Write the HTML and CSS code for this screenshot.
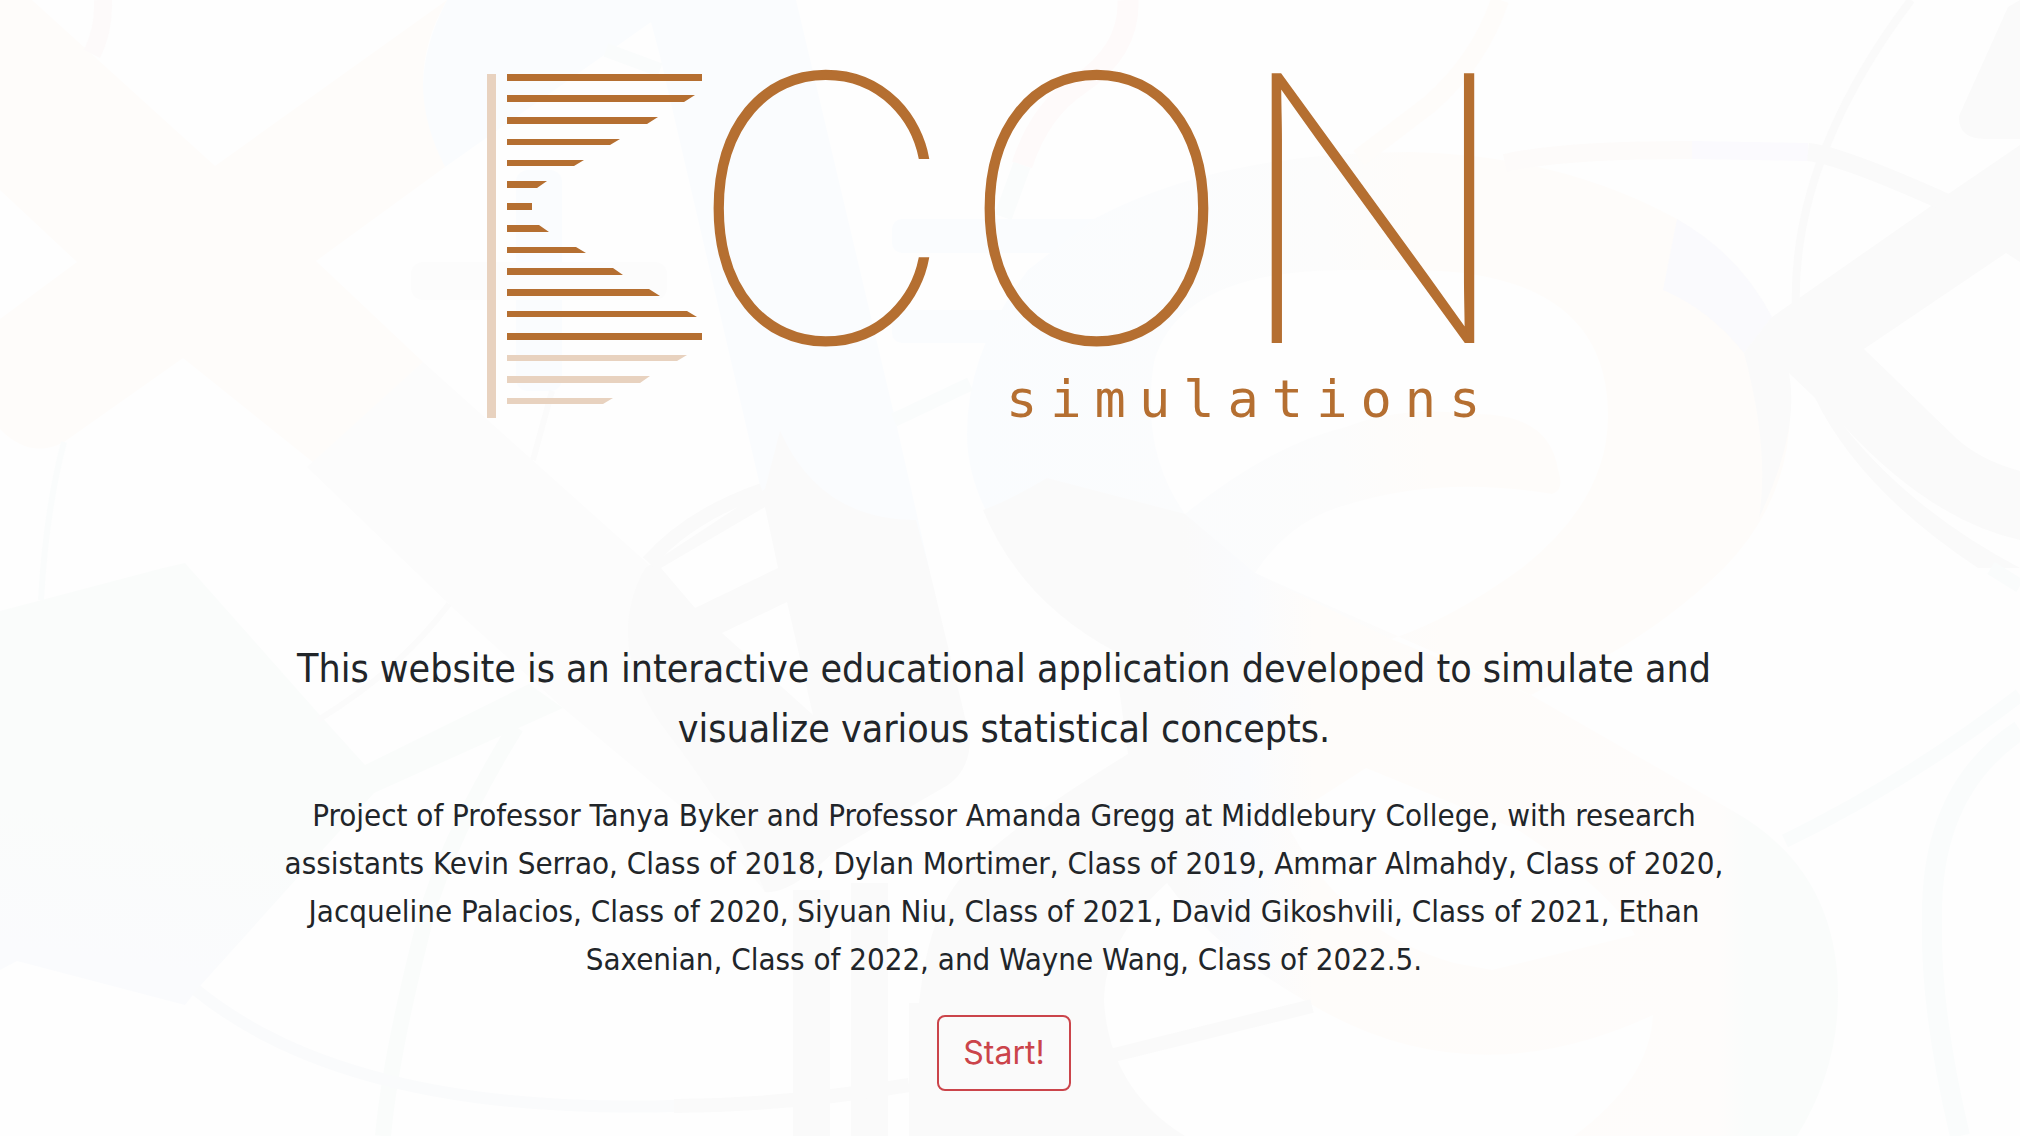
FILE: index.html
```html
<!DOCTYPE html>
<html lang="en">
<head>
<meta charset="utf-8">
<title>Econ Simulations</title>
<link rel="stylesheet" href="styles.css">
</head>
<body>
<svg class="backdrop" viewBox="0 0 2020 1136" preserveAspectRatio="xMidYMid slice" aria-hidden="true">
  <defs>
    <linearGradient id="ring" gradientUnits="userSpaceOnUse" x1="967" y1="330" x2="1420" y2="300">
      <stop offset="0" stop-color="#fafcfe"/><stop offset=".45" stop-color="#fbfcfd"/><stop offset=".8" stop-color="#fcfcfc"/><stop offset="1" stop-color="#fefcfa"/>
    </linearGradient>
    <linearGradient id="tail" gradientUnits="userSpaceOnUse" x1="900" y1="0" x2="1840" y2="0">
      <stop offset="0" stop-color="#fafafa"/><stop offset=".3" stop-color="#fafafa"/><stop offset=".37" stop-color="#fafbfd"/><stop offset=".44" stop-color="#fefcfa"/><stop offset=".87" stop-color="#fefcfb"/><stop offset=".9" stop-color="#fafcfb"/>
    </linearGradient>
    <linearGradient id="leaf" gradientUnits="userSpaceOnUse" x1="120" y1="820" x2="100" y2="960">
      <stop offset="0" stop-color="#fafcfb"/><stop offset="1" stop-color="#fafbfd"/>
    </linearGradient>
  </defs>
  <path class="blue" d="M447 0H796L897 427L929 568L780 568L765 507L660 56L651 22L445 167Q400 90 447 0Z"/>
  <path class="cream" d="M0 0H32L215 166L447 0Q400 80 445 167L316 261L423 362L314 463L183 358L64 442Q30 460 0 429V319L77 262L0 190Z"/>
  <path class="gray-light" d="M423 362L645 561L695 608L765 892L729 847L563 708L453 608L307 467Z"/>
  <path class="gray" d="M780 431Q820 520 916 520L929 568L970 738Q970 770 948 785L836 850Q790 895 765 892Q740 830 673 740Q600 650 645 568L765 489ZM661 568L695 608L778 568L765 507ZM722 633L787 602L813 715Z"/>
  <rect class="blue" x="516" y="170" width="46" height="221" rx="12"/>
  <rect class="gray-light" x="411" y="262" width="256" height="38" rx="12"/>
  <rect class="blue" x="892" y="219" width="220" height="34" rx="10"/>
  <rect class="blue" x="892" y="310" width="120" height="33" rx="10"/>
  <path fill="url(#ring)" fill-rule="evenodd" d="M1094 219Q1220 152 1410 152Q1560 155 1677 219Q1790 290 1790 409Q1790 500 1724 568Q1670 620 1608 655L1531 695L1255 573Q1290 520 1346 505Q1440 475 1552 494Q1565 490 1558 470Q1550 414 1475 414Q1400 405 1346 427Q1270 445 1185 514Q1140 450 1154 362Q1180 270 1347 270H1410Q1608 270 1608 416Q1608 500 1522 568Q1450 620 1391 639L1346 620L1114 651Q967 540 967 434Q967 350 1028 270Z"/>
  <path fill="url(#tail)" fill-rule="evenodd" d="M983 510Q1010 500 1047 478L1185 514L1255 573L1391 639L1531 695L1733 811Q1838 870 1838 995Q1838 1070 1797 1136H1574Q1650 1080 1653 1015Q1470 1100 1309 1003Q1215 950 1167 883Q1104 940 1104 1002Q1110 1090 1185 1136H909V1003H919Q930 900 974 865Q1020 820 1128 754L1114 651Q1020 600 983 510ZM1366 768L1518 830Q1610 890 1635 935L1492 970L1454 963Q1340 930 1285 820Z"/>
  <path class="lavender" d="M1677 219Q1740 255 1772 317L1744 353Q1710 310 1663 290Z"/>
  <path class="gray" d="M2020 145L1954 190L1772 317L1744 353Q1770 450 1759 518Q1800 430 1789 373L1815 398Q1860 490 1978 568H2020Q1910 510 1843 425Q1930 520 2020 540V471Q1980 460 1956 438L1864 349L2006 253L2020 262ZM2008 7L1959 116Q1958 139 1985 139H2020V0Z"/>
  <path fill="url(#leaf)" d="M0 611L163 568L185 563L318 713L365 765L529 684L563 708L374 793L200 986L185 1005L17 961L0 970Z"/>
  <path class="gray" d="M793 890H830V1136H793ZM851 883H888V1136H851Z"/>
  <g class="strands">
    <path stroke="#fafafa" stroke-width="8" d="M1911 0Q1790 160 1796 312"/>
    <path stroke="#fdfbfa" stroke-width="18" d="M1505 163Q1560 150 1692 150"/>
    <path stroke="#fbfafe" stroke-width="18" d="M1692 150L1808 152"/>
    <path stroke="#fafafa" stroke-width="18" d="M1808 152Q1840 155 1945 202"/>
    <path stroke="#fefcfa" stroke-width="18" d="M1500 0Q1480 60 1430 104L1359 158"/>
    <path stroke="#fefafa" stroke-width="21" d="M1128 0Q1130 50 1080 84Q1040 110 1022 165"/>
    <path stroke="#fafcfc" stroke-width="18" d="M1022 165L1003 217"/>
    <path stroke="#fdfafa" stroke-width="18" d="M103 0Q104 30 92 54"/>
    <path stroke="#fafcfc" stroke-width="6" d="M64 442Q46 510 41 600"/>
    <path stroke="#fbfbfb" stroke-width="6" d="M552 391L533 460M318 720Q400 670 449 604"/>
    <path stroke="#fafafa" stroke-width="14" d="M648 562Q690 515 762 490M674 1106Q790 1105 909 1085M1110 1056L1312 1006"/>
    <path stroke="#fafcfc" stroke-width="14" d="M894 420L970 384M606 50L660 70"/>
    <path stroke="#fafcfb" stroke-width="16" d="M516 727Q440 850 420 940Q390 1060 383 1136"/>
    <path stroke="#fafbfc" stroke-width="12" d="M196 990Q350 1115 674 1106"/>
    <path stroke="#fafcfc" stroke-width="14" d="M1785 841Q1910 780 2020 695M1991 568L2020 586"/>
    <path stroke="#fafcfc" stroke-width="20" d="M2020 730Q1930 790 1932 920Q1930 1010 1960 1136"/>
  </g>
</svg>
<main class="landing">
  <h1 class="brand">
    <svg class="logo" viewBox="480 60 1000 366" role="img" aria-label="Econ simulations">
      <g class="logo-pale">
        <path d="M487 74H496V418H487Z"/>
        <path d="M507 355H687L677 361H507ZM507 376H650L640 383H507ZM507 398H613L603 404H507Z"/>
      </g>
      <path class="logo-bars" d="M507 74H702V81H507ZM507 95H695L684 102H507ZM507 117H658L647 124H507ZM507 139H620L610 145H507ZM507 160H584L574 166H507ZM507 181H547L537 188H507ZM507 203H532V210H507ZM507 225H539L549 232H507ZM507 247H576L586 253H507ZM507 268H613L623 275H507ZM507 289H649L660 296H507ZM507 311H687L697 317H507ZM507 333H702V340H507Z"/>
      <text class="logo-letters"><tspan x="688" y="342">C</tspan><tspan x="959" y="342">O</tspan><tspan x="1231" y="342">N</tspan></text>
      <text class="logo-sub" x="1006" y="417">simulations</text>
    </svg>
  </h1>
  <p class="lead">This website is an interactive educational application developed to simulate and visualize various statistical concepts.</p>
  <p class="credits">Project of Professor Tanya Byker and Professor Amanda Gregg at Middlebury College, with research assistants Kevin Serrao, Class of 2018, Dylan Mortimer, Class of 2019, Ammar Almahdy, Class of 2020, Jacqueline Palacios, Class of 2020, Siyuan Niu, Class of 2021, David Gikoshvili, Class of 2021, Ethan Saxenian, Class of 2022, and Wayne Wang, Class of 2022.5.</p>
  <button class="start" type="button">Start!</button>
</main>
</body>
</html>
```
FILE: styles.css
```css
* { box-sizing: border-box; }

body {
  margin: 0;
  min-height: 100vh;
  position: relative;
  overflow-x: hidden;
  background: #fefefe;
  color: #212529;
  font-family: Tahoma, "DejaVu Sans Condensed", "DejaVu Sans", sans-serif;
}

.backdrop {
  position: absolute;
  inset: 0;
  width: 100%;
  height: 100%;
  z-index: -1;
}
.blue { fill: #fafcfe; }
.cream { fill: #fefcfa; }
.gray { fill: #fafafa; fill-rule: evenodd; }
.gray-light { fill: #fcfcfc; }
.lavender { fill: #fafafd; }
.strands path { fill: none; }

.landing {
  display: flex;
  flex-direction: column;
  align-items: center;
  padding: 60px 32px 32px 20px;
  text-align: center;
}

.brand {
  width: 100%;
  max-width: 1000px;
  margin: 0 48px 213px 0;
}
.logo { display: block; width: 100%; overflow: visible; }
.logo-bars, .logo-letters, .logo-sub { fill: #b56f31; }
.logo-pale { fill: #e8d2bf; }
.logo-letters {
  font: 100 368px Inter, sans-serif;
  stroke: #b56f31;
  stroke-width: 2px;
}
.logo-sub { font: 400 52px "DejaVu Sans Mono", monospace; letter-spacing: 13px; }

.lead, .credits {
  width: 100%;
  max-width: 1480px;
  margin: 0 0 32px;
}
.lead { font-size: 39px; line-height: 60px; }
.credits { font-size: 31px; line-height: 48px; }

.start {
  padding: 12px 24px;
  border: 2px solid #cb444a;
  border-radius: 8px;
  background: transparent;
  color: #cb444a;
  font: 400 32px/48px Inter, sans-serif;
  cursor: pointer;
}
.start:hover { background: #cb444a; color: #fff; }
```
